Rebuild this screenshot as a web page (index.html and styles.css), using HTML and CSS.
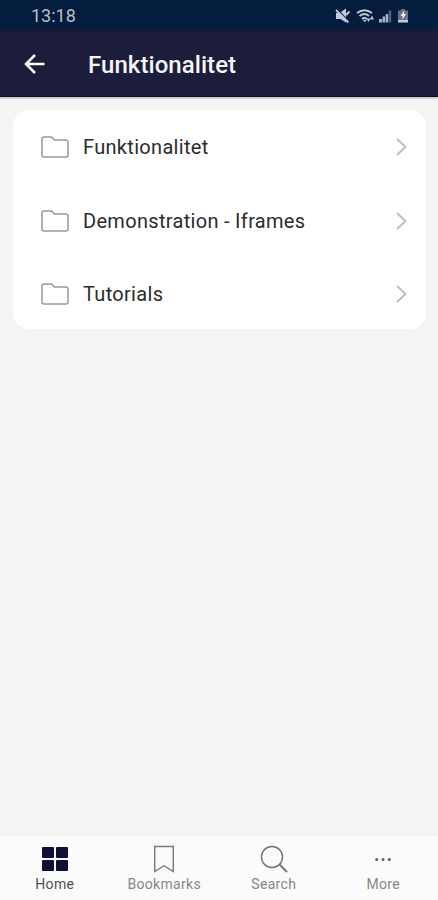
FILE: index.html
```html
<!DOCTYPE html>
<html lang="da">
<head>
<meta charset="utf-8">
<meta name="viewport" content="width=device-width, initial-scale=1">
<title>Funktionalitet</title>
<link rel="stylesheet" href="styles.css">
</head>
<body>
<div class="app">
  <div class="status">
    <span class="clock">13:18</span>
    <svg class="status-icons" width="78" height="18" viewBox="0 0 78 18" fill="#c3cad6">
      <path d="M1 6h3.500L11 1.500v14L5.500 12H1z"/>
      <path d="M2.500 2.500l12 13" stroke="#041b3b" stroke-width="1.500"/>
      <path d="M1 3l12.400 12.500M11 8l3.500-3.500" stroke="#c3cad6" stroke-width="1.800" fill="none"/>
      <path d="M22 6q7.500-5.500 15 0M24.500 9q5-4 9.500 0M27 12q2.500-2 5 0" stroke="#c3cad6" stroke-width="1.800" fill="none"/>
      <path d="M28 13h3.500l-1.700 2.300zM31.500 11.500h4l-2 3.500zM35 12.500h4l-2-4z"/>
      <path d="M44 12h3v3.500h-3zM47.500 9.500h2.700v6h-2.700zM50.700 7h2.500v8.500h-2.500z" opacity=".85"/>
      <path d="M53.700 3.500h2.500v12h-2.500z" opacity=".4"/>
      <path d="M66 2h4v1.500h3V12H63V3.500h3z" opacity=".5"/>
      <path d="M63 12.500h10V15.500H63z"/>
      <path d="M69.500 3.500L65.500 9h2.300l-.8 3.500 4.200-5.500h-2.400z" fill="#fff"/>
    </svg>
  </div>
  <header class="bar">
    <svg class="back" width="22" height="22" viewBox="0 0 22 22"><path d="M20.500 11H2.500M11 2L2 11l9 9" fill="none" stroke="#fff" stroke-width="2.500"/></svg>
    <h1 class="title">Funktionalitet</h1>
  </header>
  <main class="content">
    <ul class="card">
      <li class="row">
        <svg class="folder" width="28" height="22" viewBox="0 0 28 22"><path d="M1 3q0-2 2-2h7q1 0 1.700 1l1.600 2H25q2 0 2 2v13q0 2-2 2H3q-2 0-2-2z"/></svg>
        <span class="label">Funktionalitet</span>
        <svg class="chevron" width="11" height="18" viewBox="0 0 11 18"><path d="M1 1l8.500 8L1 17"/></svg>
      </li>
      <li class="row">
        <svg class="folder" width="28" height="22" viewBox="0 0 28 22"><path d="M1 3q0-2 2-2h7q1 0 1.700 1l1.600 2H25q2 0 2 2v13q0 2-2 2H3q-2 0-2-2z"/></svg>
        <span class="label">Demonstration - Iframes</span>
        <svg class="chevron" width="11" height="18" viewBox="0 0 11 18"><path d="M1 1l8.500 8L1 17"/></svg>
      </li>
      <li class="row">
        <svg class="folder" width="28" height="22" viewBox="0 0 28 22"><path d="M1 3q0-2 2-2h7q1 0 1.700 1l1.600 2H25q2 0 2 2v13q0 2-2 2H3q-2 0-2-2z"/></svg>
        <span class="label">Tutorials</span>
        <svg class="chevron" width="11" height="18" viewBox="0 0 11 18"><path d="M1 1l8.500 8L1 17"/></svg>
      </li>
    </ul>
  </main>
  <nav class="tabs">
    <div class="tab active">
      <svg width="28" height="28" viewBox="0 0 28 28" fill="#100f38"><rect x="1" y="2" width="12" height="11" rx="1"/><rect x="15" y="2" width="12" height="11" rx="1"/><rect x="1" y="15" width="12" height="11" rx="1"/><rect x="15" y="15" width="12" height="11" rx="1"/></svg>
      <span>Home</span>
    </div>
    <div class="tab">
      <svg width="28" height="28" viewBox="0 0 28 28"><path d="M4.700 1.500h18.600v25L14 20.700l-9.300 5.800z" fill="none" stroke="#777" stroke-width="1.400"/></svg>
      <span>Bookmarks</span>
    </div>
    <div class="tab">
      <svg width="28" height="28" viewBox="0 0 28 28" fill="none" stroke="#707070"><circle cx="12" cy="12" r="10.500" stroke-width="1.400"/><path d="M19.500 19.500l7.500 7.500" stroke-width="1.800"/></svg>
      <span>Search</span>
    </div>
    <div class="tab">
      <svg width="28" height="28" viewBox="0 0 28 28" fill="#606060"><circle cx="7.700" cy="14.500" r="1.500"/><circle cx="14" cy="14.500" r="1.500"/><circle cx="20.300" cy="14.500" r="1.500"/></svg>
      <span>More</span>
    </div>
  </nav>
</div>
</body>
</html>
```
FILE: styles.css
```css
* {
  box-sizing: border-box;
}

body {
  margin: 0;
  font-family: Roboto, "Liberation Sans", sans-serif;
}

.app {
  display: flex;
  flex-direction: column;
  height: 900px;
  background: #f4f4f4;
}

.status {
  display: flex;
  align-items: center;
  justify-content: space-between;
  height: 31px;
  padding: 1px 25px 0 31px;
  background: linear-gradient(#041d3e 85%, #161b38);
}

.clock {
  font-size: 18px;
  line-height: 20px;
  color: #b6bdc9;
}

.bar {
  display: flex;
  align-items: center;
  height: 66px;
  padding-left: 24px;
  background: #1b1d3b;
  border-bottom: 1px solid #0e1030;
  box-shadow: 0 1px 2px rgba(0, 0, 0, 0.3);
}

.title {
  margin: 2px 0 0 42px;
  font-size: 24px;
  font-weight: 500;
  line-height: 30px;
  letter-spacing: 0.060px;
  color: #f5f5f8;
}

.content {
  flex: 1;
  padding: 13px 12.500px 0 13px;
}

.card {
  height: 219px;
  margin: 0;
  padding: 0;
  list-style: none;
  background: #fff;
  border-radius: 16px;
}

.row {
  display: flex;
  align-items: center;
  height: 73.500px;
  padding: 1px 19px 0 28px;
}

.folder {
  fill: none;
  stroke: #999;
  stroke-width: 1.500;
}

.label {
  flex: 1;
  margin-left: 14px;
  font-size: 20px;
  line-height: 26px;
  letter-spacing: 0.310px;
  color: #2c2c2c;
  white-space: nowrap;
}

.chevron {
  fill: none;
  stroke: #bcbcbc;
  stroke-width: 1.800;
}

.tabs {
  display: grid;
  grid-template-columns: repeat(4, 1fr);
  height: 65px;
  background: #fbfbfb;
  border-top: 1px solid #f0f0f0;
}

.tab {
  display: flex;
  flex-direction: column;
  align-items: center;
  padding-top: 9px;
  font-size: 14px;
  line-height: 18px;
  letter-spacing: 0.300px;
  color: #878787;
}

.tab span {
  margin-top: 2px;
}

.active {
  color: #505050;
}
```
